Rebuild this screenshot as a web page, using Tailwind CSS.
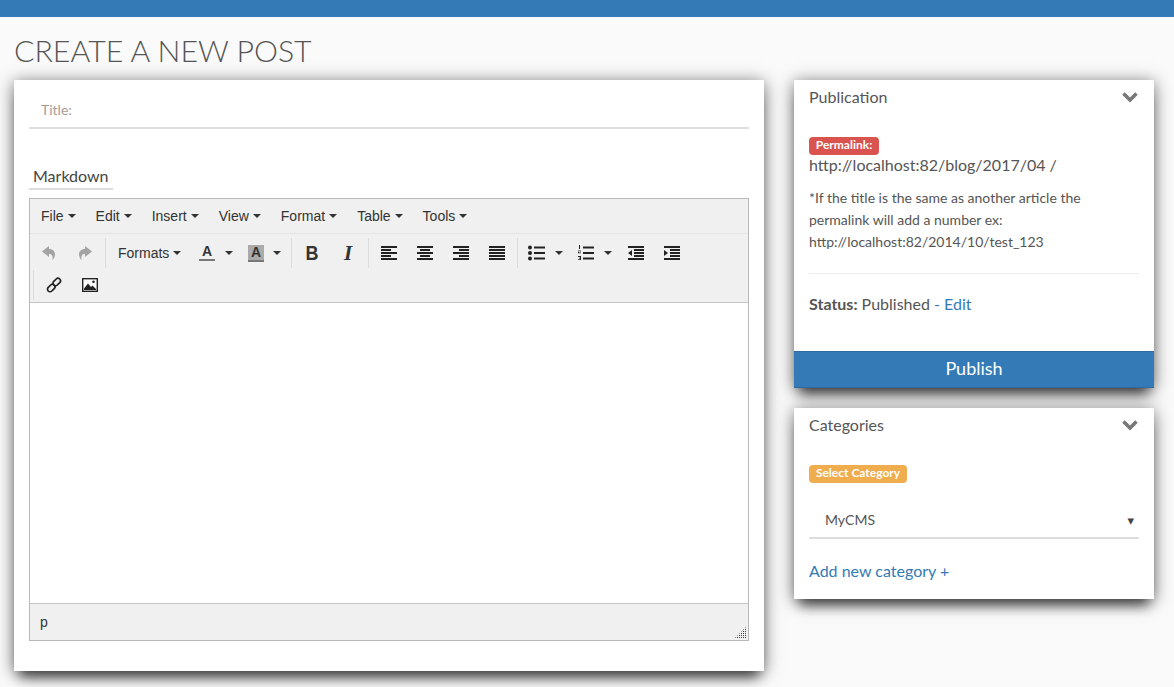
<!DOCTYPE html>
<html lang="en">
<head>
    <meta charset="UTF-8">
    <meta name="viewport" content="width=device-width, initial-scale=1.0">
    <title>Create a new post</title>
    <script src="https://cdn.jsdelivr.net/npm/@tailwindcss/browser@4"></script>
</head>
<body class="h-[687px] overflow-hidden bg-[#fafafa] font-['Lato',sans-serif] text-[#555]">
    <div class="h-[17px] bg-[#337ab7]"></div>
    <div class="px-[14px]">
        <h1 class="h-[63px] pt-[14px] text-[30.3px] leading-[38px] font-light uppercase text-[#555]">Create a new post</h1>
        <div class="flex items-start gap-[30px]">
            <!-- editor card -->
            <div class="h-[591px] w-[750px] bg-white px-[15px] shadow-[0_12px_12px_-6px_rgba(0,0,0,0.6),0_2px_16px_rgba(0,0,0,0.55)]">
                <div class="h-[49px] border-b-2 border-[#ddd] pl-3 pt-[20px] text-sm leading-[19px] text-[#a59d95]">Title:</div>
                <div class="mt-[32px] h-[29px] w-[84px] border-b-2 border-[#ddd] pl-1 text-[16px] leading-[30px] text-[#444]">Markdown</div>
                <div class="mt-2 border border-[#b9b9b9] font-['Liberation_Sans',sans-serif] text-sm text-[#333]">
                    <div class="flex h-[35px] items-center gap-5 border-b border-[#e4e4e4] bg-[#f0f0f0] pl-[11px]">
                        <span class="flex items-center">File<i class="ml-1 border-x-4 border-t-4 border-x-transparent border-t-[#333]"></i></span>
                        <span class="flex items-center">Edit<i class="ml-1 border-x-4 border-t-4 border-x-transparent border-t-[#333]"></i></span>
                        <span class="flex items-center">Insert<i class="ml-1 border-x-4 border-t-4 border-x-transparent border-t-[#333]"></i></span>
                        <span class="flex items-center">View<i class="ml-1 border-x-4 border-t-4 border-x-transparent border-t-[#333]"></i></span>
                        <span class="flex items-center">Format<i class="ml-1 border-x-4 border-t-4 border-x-transparent border-t-[#333]"></i></span>
                        <span class="flex items-center">Table<i class="ml-1 border-x-4 border-t-4 border-x-transparent border-t-[#333]"></i></span>
                        <span class="flex items-center">Tools<i class="ml-1 border-x-4 border-t-4 border-x-transparent border-t-[#333]"></i></span>
                    </div>
                    <div class="h-[69px] border-b border-[#c5c5c5] bg-[#f0f0f0] pt-[4px]">
                        <!-- first toolbar row -->
                        <div class="flex h-[30px] items-center pl-[1px]">
                            <div class="flex h-full w-[74px] items-center">
                                <span class="flex w-9 justify-center"><svg width="16" height="16" viewBox="0 0 16 16" fill="#a3a3a3"><path d="M8 1 1 6.500 8 12V9c3 0 4 1.500 3.500 6C15 12 15.500 4 8 4z"/></svg></span>
                                <span class="flex w-9 justify-center"><svg width="16" height="16" viewBox="0 0 16 16" fill="#a3a3a3"><path d="M8 1l7 5.500L8 12V9c-3 0-4 1.500-3.500 6C1 12 .5 4 8 4z"/></svg></span>
                            </div>
                            <div class="flex h-full w-[186px] items-center border-l border-[#dcdcdc] pl-[12px]">
                                <span class="flex w-[81px] items-center">Formats<i class="ml-1 border-x-4 border-t-4 border-x-transparent border-t-[#333]"></i></span>
                                <span class="flex h-4 w-4 flex-col items-center justify-end border-b-2 border-[#777] text-[14px] leading-[15px] font-bold">A</span>
                                <i class="ml-[10px] border-x-4 border-t-4 border-x-transparent border-t-[#333]"></i>
                                <span class="ml-[15px] flex h-[17px] w-4 flex-col items-center justify-end border-b-2 border-[#777] bg-[#aaa] text-[14px] leading-[15px] font-bold">A</span>
                                <i class="ml-[9px] border-x-4 border-t-4 border-x-transparent border-t-[#333]"></i>
                            </div>
                            <div class="flex h-full w-[77px] items-center border-l border-[#dcdcdc] pl-[2px]">
                                <span class="w-9 scale-x-90 text-center text-[20px] leading-none font-bold">B</span>
                                <span class="w-9 text-center font-['Liberation_Serif',serif] text-[21px] leading-none font-bold italic">I</span>
                            </div>
                            <div class="flex h-full w-[149px] items-center border-l border-[#dcdcdc] pl-[2px]">
                                <span class="flex w-9 justify-center"><svg width="16" height="16" viewBox="0 0 16 16" fill="#222"><path d="M0 1h16v2H0zM0 4h10v2H0zM0 7h16v2H0zM0 10h10v2H0zM0 13h16v2H0z"/></svg></span>
                                <span class="flex w-9 justify-center"><svg width="16" height="16" viewBox="0 0 16 16" fill="#222"><path d="M0 1h16v2H0zM3 4h10v2H3zM0 7h16v2H0zM3 10h10v2H3zM0 13h16v2H0z"/></svg></span>
                                <span class="flex w-9 justify-center"><svg width="16" height="16" viewBox="0 0 16 16" fill="#222"><path d="M0 1h16v2H0zM6 4h10v2H6zM0 7h16v2H0zM6 10h10v2H6zM0 13h16v2H0z"/></svg></span>
                                <span class="flex w-9 justify-center"><svg width="16" height="16" viewBox="0 0 16 16" fill="#222"><path d="M0 1h16v2H0zM0 4h16v2H0zM0 7h16v2H0zM0 10h16v2H0zM0 13h16v2H0z"/></svg></span>
                            </div>
                            <div class="flex h-full items-center border-l border-[#dcdcdc] pl-[10px]">
                                <svg width="18" height="16" viewBox="0 0 18 16" fill="#222"><circle cx="2" cy="2.500" r="2"/><circle cx="2" cy="8" r="2"/><circle cx="2" cy="13.500" r="2"/><path d="M6 1.500h11v2H6zM6 7h11v2H6zM6 12.500h11v2H6z"/></svg>
                                <i class="ml-[9px] border-x-4 border-t-4 border-x-transparent border-t-[#333]"></i>
                                <svg class="ml-[14px]" width="18" height="16" viewBox="0 0 18 16" fill="#222"><path d="M2 0h1v4H2zM1 5.500h3v1H2v1h2v.800H1v-1.800h2v-.500H1zM1 11h3v4H1v-.700h2v-.800H2v-.700h1v-.800H1zM6 1.500h11v2H6zM6 7h11v2H6zM6 12.500h11v2H6z"/></svg>
                                <i class="ml-[9px] border-x-4 border-t-4 border-x-transparent border-t-[#333]"></i>
                                <span class="ml-[6px] flex w-9 justify-center"><svg width="16" height="16" viewBox="0 0 16 16" fill="#222"><path d="M0 1h16v2H0zM6 4h10v2H6zM6 7h10v2H6zM6 10h10v2H6zM0 13h16v2H0zM4 5v6L0 8z"/></svg></span>
                                <span class="flex w-9 justify-center"><svg width="16" height="16" viewBox="0 0 16 16" fill="#222"><path d="M0 1h16v2H0zM6 4h10v2H6zM6 7h10v2H6zM6 10h10v2H6zM0 13h16v2H0zM0 5v6l4-3z"/></svg></span>
                            </div>
                        </div>
                        <!-- second toolbar row -->
                        <div class="mt-[2px] ml-[3px] flex h-[30px] w-min items-center border-l border-[#dcdcdc] pl-[2px]">
                            <span class="flex w-9 justify-center"><svg width="16" height="16" viewBox="0 0 16 16" fill="none" stroke="#222" stroke-width="1.700"><rect x="1" y="8.500" width="8.500" height="5" rx="2.500" transform="rotate(-45 5.250 11)"/><rect x="6.500" y="2.500" width="8.500" height="5" rx="2.500" transform="rotate(-45 10.750 5)"/></svg></span>
                            <span class="flex w-9 justify-center"><svg width="16" height="14" viewBox="0 0 16 14"><rect x=".7" y=".7" width="14.600" height="12.600" fill="#fff" stroke="#222" stroke-width="1.400"/><path d="M2 12V10.500L6 5.500 9 9l1.500-1.500L14 11v1z" fill="#222"/><circle cx="11.500" cy="3.800" r="1.300" fill="#222"/></svg></span>
                        </div>
                    </div>
                    <div class="h-[300px] bg-white"></div>
                    <div class="relative h-[37px] border-t border-[#c5c5c5] bg-[#f0f0f0] pl-[10px] pt-[9px] leading-[18px]">
                        p
                        <svg class="absolute right-[2px] bottom-[2px]" width="11" height="11" viewBox="0 0 11 11">
                            <defs><pattern id="grip" width="2" height="2" patternUnits="userSpaceOnUse"><rect width="1" height="1" fill="#5b2a6e"/></pattern></defs>
                            <path d="M0 11 11 0v11z" fill="url(#grip)"/>
                        </svg>
                    </div>
                </div>
            </div>

            <!-- sidebar -->
            <div class="flex w-[360px] flex-col gap-5">
                <div class="h-[308px] bg-white shadow-[0_12px_12px_-6px_rgba(0,0,0,0.6),0_2px_16px_rgba(0,0,0,0.55)]">
                    <div class="flex h-[33px] items-center justify-between px-[15px] text-[16px] text-[#555]">
                        <span>Publication</span>
                        <svg class="mr-[1px]" width="16" height="12" viewBox="0 0 16 12" fill="none" stroke="#777" stroke-width="3.600"><path d="M1.500 2.500 8 9l6.500-6.500"/></svg>
                    </div>
                    <div class="px-[15px] pt-[24px]">
                        <span class="block h-[18px] w-[70px] rounded-[4px] bg-[#d9534f] text-center text-[12px] leading-[16px] font-bold text-white">Permalink:</span>
                        <p class="-mt-px text-[16px] leading-[22px]">http://localhost:82/blog/2017/04 /</p>
                        <p class="mt-[11px] w-[300px] text-sm leading-[22px]">*If the title is the same as another article the permalink will add a number ex: http://localhost:82/2014/10/test_123</p>
                        <div class="mt-[20px] h-px bg-[#eee]"></div>
                        <p class="mt-[19px] text-[16px] leading-[22px]"><b>Status:</b> Published <a class="text-[#337ab7]">- Edit</a></p>
                    </div>
                    <div class="mt-[36px] h-[37px] border-y border-[#2e6da4] bg-[#337ab7] text-center text-[18px] leading-[32px] text-white">Publish</div>
                </div>
                <div class="h-[191px] bg-white shadow-[0_12px_12px_-6px_rgba(0,0,0,0.6),0_2px_16px_rgba(0,0,0,0.55)]">
                    <div class="flex h-[33px] items-center justify-between px-[15px] text-[16px] text-[#555]">
                        <span>Categories</span>
                        <svg class="mr-[1px]" width="16" height="12" viewBox="0 0 16 12" fill="none" stroke="#777" stroke-width="3.600"><path d="M1.500 2.500 8 9l6.500-6.500"/></svg>
                    </div>
                    <div class="px-[15px] pt-[24px]">
                        <span class="block h-[18px] w-[98px] rounded-[4px] bg-[#f0ad4e] text-center text-[12px] leading-[16px] font-bold text-white">Select Category</span>
                        <div class="relative mt-[19px] h-[37px] border-b-2 border-[#ddd]">
                            <select class="h-full w-full appearance-none bg-transparent pl-4 text-sm text-[#555]"><option>MyCMS</option></select>
                            <span class="absolute top-[12px] right-[5px] font-['DejaVu_Sans',sans-serif] text-[13px] leading-[14px] text-[#444]">▾</span>
                        </div>
                        <a class="mt-[21px] block text-[16px] leading-[22px] text-[#337ab7]">Add new category +</a>
                    </div>
                </div>
            </div>
        </div>
    </div>
</body>
</html>
